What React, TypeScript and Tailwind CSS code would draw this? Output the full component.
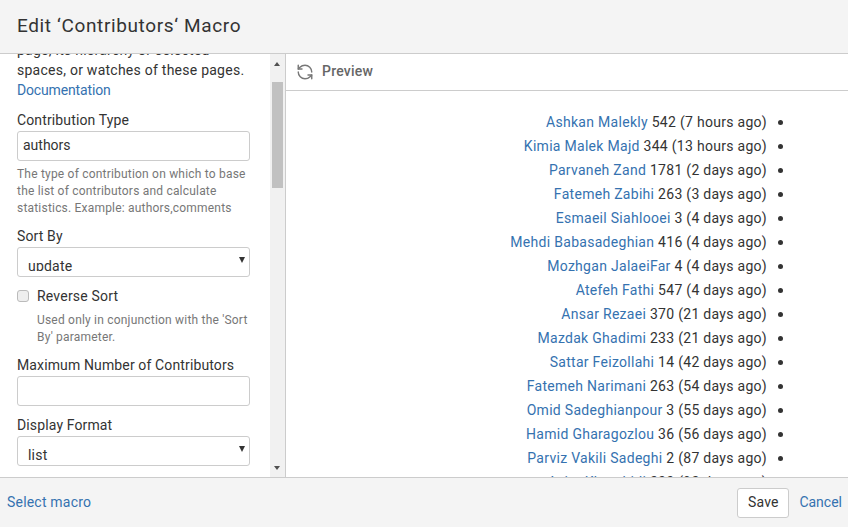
import { RefreshCcw } from 'lucide-react';

const contributors = [
  ['Ashkan Malekly', '542 (7 hours ago)'],
  ['Kimia Malek Majd', '344 (13 hours ago)'],
  ['Parvaneh Zand', '1781 (2 days ago)'],
  ['Fatemeh Zabihi', '263 (3 days ago)'],
  ['Esmaeil Siahlooei', '3 (4 days ago)'],
  ['Mehdi Babasadeghian', '416 (4 days ago)'],
  ['Mozhgan JalaeiFar', '4 (4 days ago)'],
  ['Atefeh Fathi', '547 (4 days ago)'],
  ['Ansar Rezaei', '370 (21 days ago)'],
  ['Mazdak Ghadimi', '233 (21 days ago)'],
  ['Sattar Feizollahi', '14 (42 days ago)'],
  ['Fatemeh Narimani', '263 (54 days ago)'],
  ['Omid Sadeghianpour', '3 (55 days ago)'],
  ['Hamid Gharagozlou', '36 (56 days ago)'],
  ['Parviz Vakili Sadeghi', '2 (87 days ago)'],
  ['Azita Khorshidi', '233 (92 days ago)'],
];

const labelClass = 'block text-[14px] leading-5 tracking-[0.13px] text-[#333]';
const fieldClass =
  'mt-[1px] h-[30px] w-[233px] rounded-[3px] border border-[#ccc] bg-white text-[14px] text-[#333]';
const hintClass = 'text-[12px] leading-[17px] text-[#777]';

function SelectBox({ value }: { value: string }) {
  return (
    <div className={`${fieldClass} relative pl-[10px] pt-[8px]`}>
      <div className="h-[15px] overflow-hidden leading-5">{value}</div>
      <span className="absolute right-[4px] top-[9px] h-0 w-0 border-x-[3.5px] border-t-[6px] border-x-transparent border-t-[#333]" />
    </div>
  );
}

export default function App() {
  return (
    <div className="flex h-[527px] w-[848px] flex-col overflow-hidden bg-white font-['Roboto',sans-serif] tracking-[0.2px] text-[#333]">
      <header className="flex h-[54px] shrink-0 items-center border-b border-[#ccc] bg-[#f4f4f4] px-[17px]">
        <h1 className="text-[19px] font-normal tracking-[0.63px] text-[#333]">
          Edit ‘Contributors‘ Macro
        </h1>
      </header>

      <div className="flex min-h-0 flex-1">
        <div className="flex w-[286px] shrink-0 border-r border-[#ccc]">
          <div className="min-w-0 flex-1 overflow-hidden pl-[17px]">
            <div className="-mt-[14px] w-[240px] text-[14px] leading-5 tracking-[0.25px]">
              <p>page, its hierarchy or selected</p>
              <p className="whitespace-nowrap">spaces, or watches of these pages.</p>
              <a className="tracking-[-0.15px] text-[#3572b0]">Documentation</a>
            </div>
            <label className={`${labelClass} mt-[10px]`}>Contribution Type</label>
            <div className={`${fieldClass} px-[5px] leading-[27px] tracking-[0px]`}>authors</div>
            <p className={`${hintClass} mt-[5px] w-[235px]`}>
              The type of contribution on which to base the list of contributors and calculate
              statistics. Example: authors,comments
            </p>
            <label className={`${labelClass} mt-[9px]`}>Sort By</label>
            <SelectBox value="update" />
            <div className="mt-[9px] flex items-center gap-[8px] text-[14px] leading-5">
              <span className="h-[12px] w-[12px] rounded-[3px] border border-[#bbb] bg-[#eee]" />
              Reverse Sort
            </div>
            <p className={`${hintClass} mt-[6px] w-[215px] pl-[20px] box-content`}>
              Used only in conjunction with the 'Sort By' parameter.
            </p>
            <label className={`${labelClass} mt-[9px]`}>Maximum Number of Contributors</label>
            <div className={fieldClass} />
            <label className={`${labelClass} mt-[9px]`}>Display Format</label>
            <SelectBox value="list" />
          </div>
          <div className="relative flex w-[15px] shrink-0 flex-col bg-[#f1f1f1]">
            <span className="absolute left-[4px] top-[8px] h-0 w-0 border-x-[3.5px] border-b-[4px] border-x-transparent border-b-[#505050]" />
            <div className="mx-[2px] mt-[28px] h-[106px] bg-[#c1c1c1]" />
            <span className="absolute bottom-[7px] left-[4px] h-0 w-0 border-x-[3.5px] border-t-[4px] border-x-transparent border-t-[#505050]" />
          </div>
        </div>

        <div className="flex min-w-0 flex-1 flex-col">
          <div className="flex h-[37px] shrink-0 items-center gap-[8px] border-b border-[#ccc] pb-[1px] pl-[10px] text-[14px] font-medium text-[#666]">
            <RefreshCcw size={18} strokeWidth={1.9} className="text-[#777]" />
            Preview
          </div>
          <ul className="min-h-0 flex-1 overflow-hidden pr-[81px] pt-[19px] text-right text-[14px] leading-6 tracking-[0.29px]">
            {contributors.map(([name, stats]) => (
              <li key={name} className="relative">
                <a className="text-[#3572b0]">{name}</a> {stats}
                <span className="absolute -right-[16px] top-[10px] h-[5px] w-[5px] rounded-full bg-[#333]" />
              </li>
            ))}
          </ul>
        </div>
      </div>

      <footer className="flex h-[50px] shrink-0 items-center border-t border-[#ccc] bg-[#f4f4f4] pl-[7px] pr-[6px] text-[14px]">
        <a className="text-[#3572b0]">Select macro</a>
        <button
          type="button"
          className="ml-auto h-[30px] w-[52px] rounded-[3px] border border-[#ccc] bg-white text-[14px] text-[#333]"
        >
          Save
        </button>
        <a className="ml-[10px] tracking-[0px] text-[#3572b0]">Cancel</a>
      </footer>
    </div>
  );
}
